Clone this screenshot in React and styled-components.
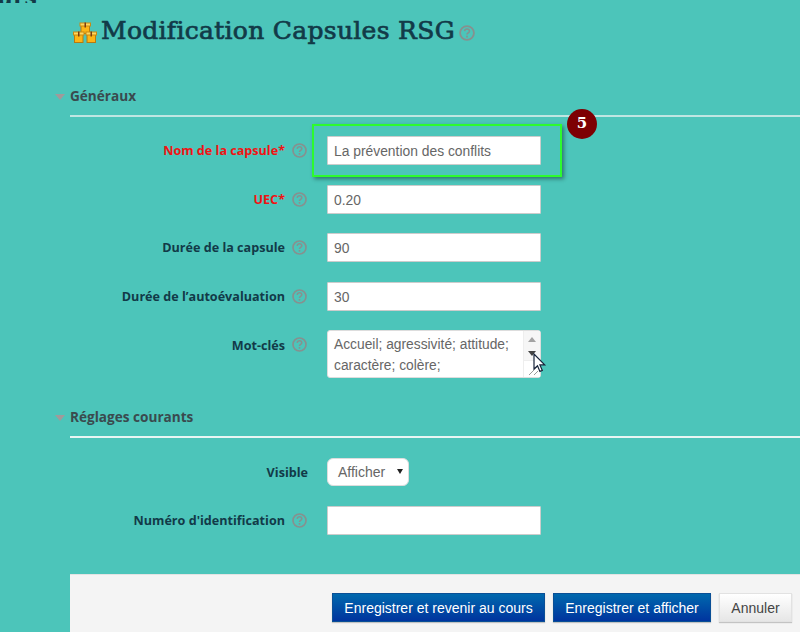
import React from "react";
import styled, { createGlobalStyle } from "styled-components";

const Global = createGlobalStyle`
  html, body { margin: 0; padding: 0; height: 632px; overflow: hidden; background: #4cc5ba; }
  * { box-sizing: border-box; }
`;
const Page = styled.div`
  position: relative; width: 800px; height: 632px; overflow: hidden; background: #4cc5ba;
  font-family: "Open Sans", "Noto Sans", sans-serif; display: flex; flex-direction: column;
`;
const Clip = styled.div`
  height: 3px; overflow: hidden; display: flex; align-items: flex-end;
  font: 700 22px/26px "DejaVu Serif", serif; color: #123a48;
`;
const ClipText = styled.span`
  display: block; margin-left: -3px; margin-bottom: -7px;
`;
const Header = styled.div`
  display: flex; align-items: center; height: 44px; margin-top: 7px; padding-left: 73px;
`;
const Title = styled.h1`
  margin: -2px 0 0 4px; font: 400 25px/44px "DejaVu Serif", serif; color: #123a48; white-space: nowrap;
  -webkit-text-stroke: 0.7px #123a48; letter-spacing: 0.3px;
`;
const TitleHelp = styled.span`
  display: flex; margin-left: 4px; margin-top: 1px;
`;
const Section = styled.section`
  margin-top: ${p => p.$top}px; padding-left: 70px;
`;
const Legend = styled.div`
  position: relative; height: 32px; line-height: 22px; border-bottom: 2px solid ${p => p.$line};
  font-weight: 700; font-size: 13.6px; color: #3a4a4e;
  &::before {
    content: ""; position: absolute; left: -15px; top: 9px;
    border-left: 5px solid transparent; border-right: 5px solid transparent; border-top: 6px solid #a09a9a;
  }
`;
const Row = styled.div`
  display: grid; grid-template-columns: 215px 15px 1fr; align-items: ${p => p.$top ? "start" : "center"};
  height: ${p => p.$h}px; margin-top: ${p => p.$mt}px;
`;
const Label = styled.label`
  grid-column: ${p => p.$wide ? "span 2" : "auto"};
  width: ${p => p.$wide ? "238px" : "auto"};
  text-align: right; font-weight: 700; font-size: 12.6px; color: ${p => p.$req ? "#f01414" : "#123a48"};
  padding-top: ${p => p.$top ? 7 : 0}px; white-space: nowrap;
`;
const HelpWrap = styled.span`
  display: flex; margin-left: 7px; padding-top: ${p => p.$top ? 7 : 0}px; width: 15px;
`;
const Control = styled.div`
  margin-left: 27px;
`;
const Input = styled.input`
  display: block; width: 214px; height: 29px; border: 1px solid #ccc; border-radius: 1px; background: #fff;
  padding: 0 6px; font: 13.85px "Liberation Sans", Arial, sans-serif; color: #666; outline: none;
`;
const AreaBox = styled.div`
  position: relative; width: 214px; height: 48px; background: #fff; border: 1px solid #ddd;
  border-radius: 3px; padding: 3px 6px; font: 13.8px/21px "Liberation Sans", Arial, sans-serif; color: #666;
`;
const Bar = styled.div`
  position: absolute; right: 0; top: 0; bottom: 0; width: 17px; border-left: 1px solid #eee; background: #f6f6f6;
`;
const ArrowUp = styled.i`
  position: absolute; left: 4px; top: 6px; border-left: 4px solid transparent; border-right: 4px solid transparent;
  border-bottom: 5px solid #a3a3a3;
`;
const ArrowDown = styled.i`
  position: absolute; left: 4px; top: 20px; border-left: 4px solid transparent; border-right: 4px solid transparent;
  border-top: 5px solid #444;
`;
const Corner = styled.div`
  position: absolute; right: 0; bottom: 0; width: 17px; height: 17px; background: #fff; border-left: 1px solid #eee; border-top: 1px solid #eee;
`;
const Grip = styled.svg`
  position: absolute; right: 1px; bottom: 1px;
`;
const Select = styled.div`
  position: relative; width: 82px; height: 28px; background: #fff; border: 1px solid #ddd; border-radius: 6px;
  font: 14px/26px "Liberation Sans", Arial, sans-serif; color: #666; padding-left: 10px;
  &::after {
    content: ""; position: absolute; right: 5px; top: 10px;
    border-left: 3.5px solid transparent; border-right: 3.5px solid transparent; border-top: 5px solid #222;
  }
`;
const Footer = styled.div`
  margin: auto 0 0 70px; height: 58px; background: #f4f4f4; border-top: 1px solid #e3e3e3;
  display: flex; justify-content: flex-end; align-items: flex-start; gap: 8px; padding: 18px 8px 0 0;
`;
const Btn = styled.button`
  height: 29px; width: ${p => p.$w}px; padding: 0; font: 14px "Liberation Sans", Arial, sans-serif; cursor: pointer;
  border: 1px solid ${p => p.$primary ? "#0a4f96" : "#e2e2e2"};
  color: ${p => p.$primary ? "#fff" : "#444"};
  background: ${p => p.$primary ? "linear-gradient(#0068ad, #00349e)" : "linear-gradient(#fff, #e6e6e6)"};
  box-shadow: 0 1px 1px rgba(0,0,0,.2);
`;
const Highlight = styled.div`
  position: absolute; left: 312px; top: 124px; width: 250px; height: 53px; border: 2px solid #2dfb2d;
  box-shadow: 2px 2px 4px rgba(0,0,0,.4); pointer-events: none;
`;
const Badge = styled.div`
  position: absolute; left: 567px; top: 109px; width: 30px; height: 30px; border-radius: 50%;
  background: #7d0003; color: #fff; text-align: center; font: 700 15px/29px "DejaVu Serif", serif;
`;
const Cursor = styled.svg`
  position: absolute; left: 533px; top: 353px;
`;

const Help = ({ size = 15 }) => (
  <svg width={size} height={size} viewBox="0 0 15 15" aria-hidden="true">
    <circle cx="7.5" cy="7.5" r="6.5" fill="none" stroke="#86918f" strokeWidth="1.7" />
    <path d="M5.2 5.8c.2-1.4 1.1-2 2.3-2 1.3 0 2.3.8 2.3 2 0 1.7-2.3 1.6-2.3 3.2" fill="none" stroke="#86918f" strokeWidth="1.5" />
    <rect x="6.7" y="10" width="1.6" height="1.7" fill="#86918f" />
  </svg>
);
const Crates = () => (
  <svg width="24" height="22" viewBox="0 0 24 22" aria-hidden="true">
    {[[6.5, 1], [0, 10], [12.5, 10]].map(([x, y], i) => (
      <g key={i} transform={`translate(${x} ${y})`}>
        <rect x="1.5" y="3" width="8.5" height="8.5" fill="#fdb515" stroke="#b77a10" />
        <rect x="0.5" y="1" width="10.5" height="3" fill="#ffd75e" stroke="#c98a12" />
        <rect x="5" y="0.5" width="1.5" height="5" fill="#7a3d10" />
      </g>
    ))}
  </svg>
);

export default function App() {
  return (
    <Page>
      <Global />
      <Clip><ClipText>urs</ClipText></Clip>
      <Header>
        <Crates />
        <Title>Modification Capsules RSG</Title>
        <TitleHelp><Help size={16} /></TitleHelp>
      </Header>
      <Section $top={31}>
        <Legend $line="#bfe6e2">Généraux</Legend>
        <Row $h={29} $mt={19}>
          <Label $req>Nom de la capsule*</Label><HelpWrap><Help /></HelpWrap>
          <Control><Input readOnly value="La prévention des conflits" /></Control>
        </Row>
        <Row $h={29} $mt={20}>
          <Label $req>UEC*</Label><HelpWrap><Help /></HelpWrap>
          <Control><Input readOnly value="0.20" /></Control>
        </Row>
        <Row $h={29} $mt={19}>
          <Label>Durée de la capsule</Label><HelpWrap><Help /></HelpWrap>
          <Control><Input readOnly value="90" /></Control>
        </Row>
        <Row $h={29} $mt={20}>
          <Label>Durée de l’autoévaluation</Label><HelpWrap><Help /></HelpWrap>
          <Control><Input readOnly value="30" /></Control>
        </Row>
        <Row $h={48} $mt={19} $top>
          <Label $top>Mot-clés</Label><HelpWrap $top><Help /></HelpWrap>
          <Control>
            <AreaBox>
              Accueil; agressivité; attitude;<br />caractère; colère;
              <Bar>
                <ArrowUp /><ArrowDown /><Corner />
                <Grip width="11" height="11" viewBox="0 0 11 11" aria-hidden="true">
                  <path d="M1 10 10 1M6 10l4-4" stroke="#9a9a9a" strokeWidth="1" />
                </Grip>
              </Bar>
            </AreaBox>
          </Control>
        </Row>
      </Section>
      <Section $top={28}>
        <Legend $line="#e8f6f4">Réglages courants</Legend>
        <Row $h={28} $mt={20}>
          <Label $wide>Visible</Label>
          <Control><Select>Afficher</Select></Control>
        </Row>
        <Row $h={29} $mt={20}>
          <Label>Numéro d'identification</Label><HelpWrap><Help /></HelpWrap>
          <Control><Input readOnly value="" /></Control>
        </Row>
      </Section>
      <Footer>
        <Btn $primary $w={213}>Enregistrer et revenir au cours</Btn>
        <Btn $primary $w={158}>Enregistrer et afficher</Btn>
        <Btn $w={73}>Annuler</Btn>
      </Footer>
      <Highlight />
      <Badge>5</Badge>
      <Cursor width="14" height="20" viewBox="0 0 14 20" aria-hidden="true">
        <path d="M1 1v15l3.5-3.2 2.4 5.6 2.4-1-2.4-5.5h4.8z" fill="#fff" stroke="#16233a" strokeWidth="1.2" />
      </Cursor>
    </Page>
  );
}
